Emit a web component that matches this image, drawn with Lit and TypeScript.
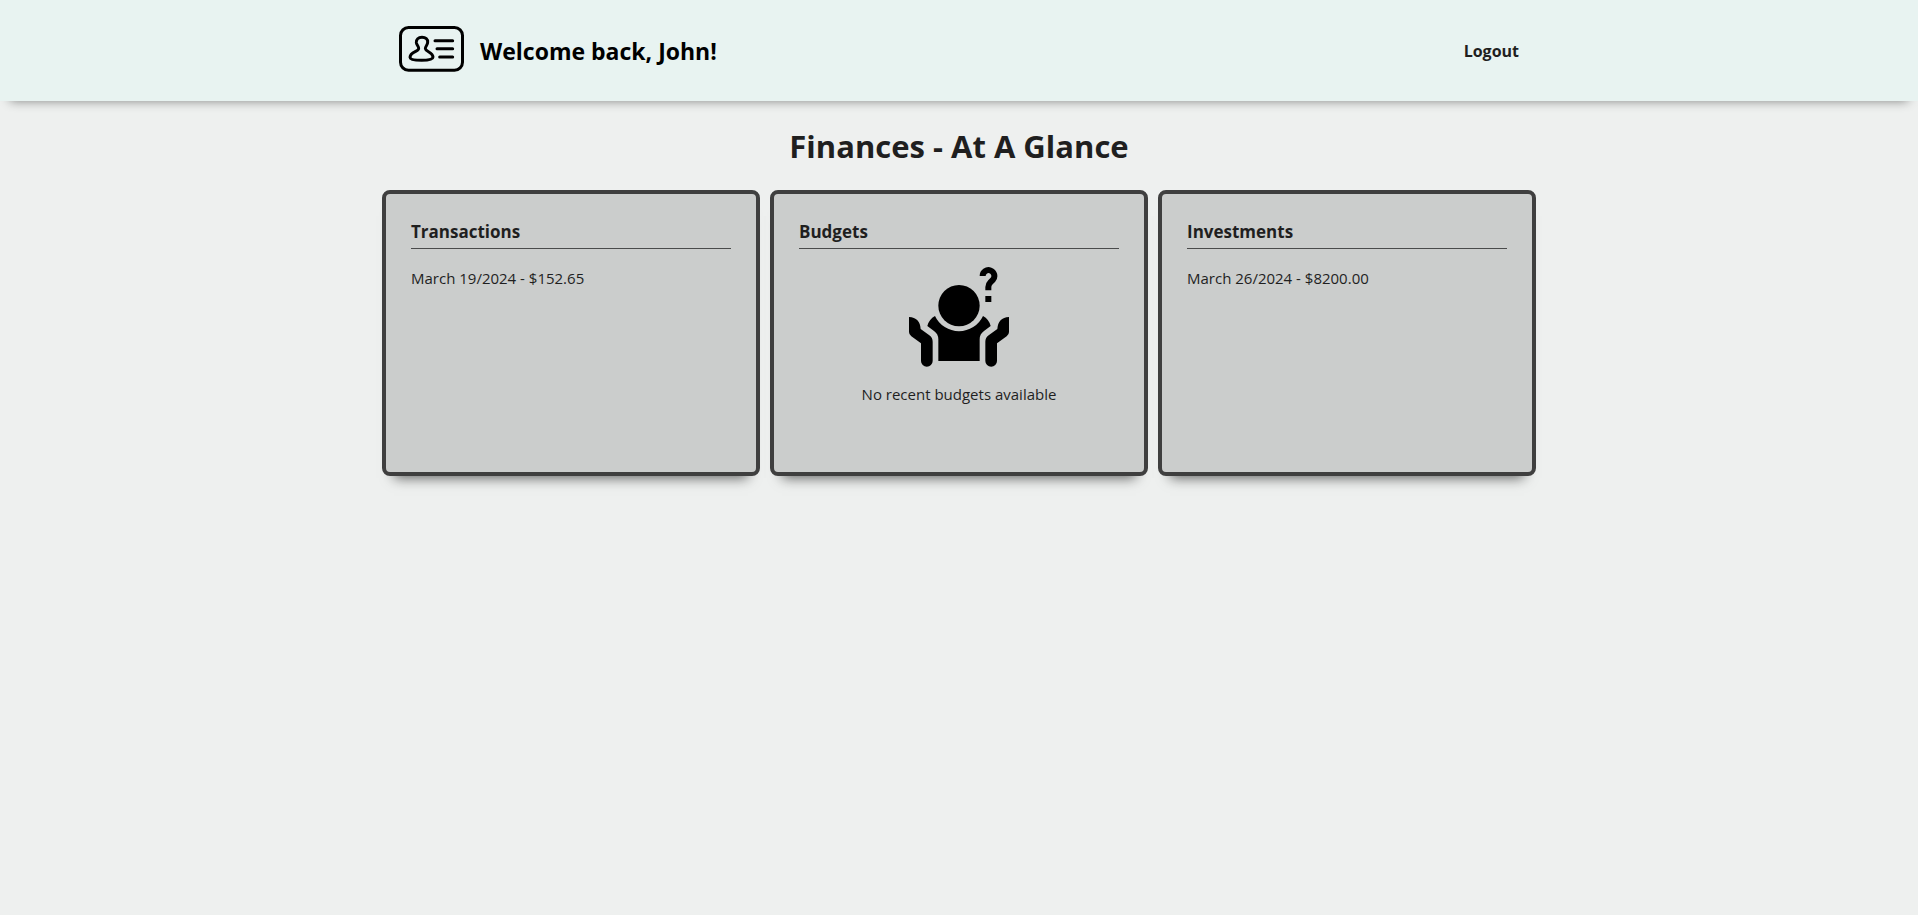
import { LitElement, html, css, svg } from "lit";
import { customElement, property } from "lit/decorators.js";

const idCardIcon = svg`
  <svg class="logo" viewBox="0 0 195 150" fill="none" stroke="#000" stroke-linecap="round" stroke-linejoin="round" aria-hidden="true">
    <rect x="4.5" y="4.5" width="186" height="128" rx="24" stroke-width="9" />
    <path stroke-width="9" d="M108 44H161M114 68H161M122 93H161" />
    <path stroke-width="9" d="M69 34C58 34 51 40 52 50C53 58 60 62 59 68C58 78 34 77 33 94C33 102 51 103 68 103C86 103 102 101 102 93C101 77 80 78 79 68C78 62 86 58 86 49C87 40 80 34 69 34Z" />
  </svg>`;

const shrugIcon = svg`
  <svg class="shrug" viewBox="0 0 300 300" fill="#000" aria-hidden="true">
    <circle cx="150" cy="116" r="62" />
    <path d="M221 27A17.500 17.500 0 1 1 252 38L244 46Q238 52 238 60V70" fill="none" stroke="#000" stroke-width="18" />
    <rect x="229" y="87" width="18" height="18" />
    <path d="M78 147A79.500 79.500 0 0 0 222 147Q240 157 245 177L225 192Q212 201 212 217V282H88V217Q88 201 75 192L55 177Q60 157 78 147Z" />
    <path d="M0 150Q33 152 35 186L61 205Q71 212 71 224V282A17.500 17.500 0 0 1 36 282V229L7 208Q0 203 0 195Z" />
    <path d="M300 150Q267 152 265 186L239 205Q229 212 229 224V282A17.500 17.500 0 0 0 264 282V229L293 208Q300 203 300 195Z" />
  </svg>`;

@customElement("finance-card")
class FinanceCard extends LitElement {
  @property() heading = "";
  @property({ attribute: false }) entries: string[] = [];

  static styles = css`
    :host {
      display: block;
      box-sizing: border-box;
      min-height: 286px;
      padding: 25px;
      border: 4px solid #3f3f3f;
      border-radius: 8px;
      background: #cbcdcc;
      box-shadow: 0 14px 12px -12px rgba(0, 0, 0, 0.6);
    }
    .heading {
      margin: 0 0 18px;
      padding-bottom: 4px;
      border-bottom: 1px solid #4a4b4b;
      font-size: 17px;
      line-height: 25px;
      font-weight: 700;
    }
    .entries {
      margin: 0;
      padding: 0;
      list-style: none;
      line-height: 22px;
    }
    .empty {
      display: flex;
      flex-direction: column;
      align-items: center;
      gap: 16px;
    }
    .empty p {
      margin: 0;
      line-height: 22px;
    }
    .shrug {
      width: 100px;
      height: 100px;
    }
  `;

  render() {
    return html`
      <h2 class="heading">${this.heading}</h2>
      ${this.entries.length
        ? html`<ul class="entries">${this.entries.map((e) => html`<li>${e}</li>`)}</ul>`
        : html`<div class="empty">
            ${shrugIcon}
            <p>No recent ${this.heading.toLowerCase()} available</p>
          </div>`}
    `;
  }
}

@customElement("app-root")
class AppRoot extends LitElement {
  static styles = css`
    :host {
      display: block;
      box-sizing: border-box;
      min-height: 100vh;
      border-bottom: 3px solid #fff;
      background: #eef0ef;
      color: #1f1f1f;
      font-family: "Segoe UI", "Open Sans", "Noto Sans", sans-serif;
      font-size: 15px;
    }
    .header {
      background: #e8f3f1;
      box-shadow: 0 10px 10px -10px rgba(0, 0, 0, 0.45);
    }
    .bar {
      box-sizing: border-box;
      max-width: 1154px;
      min-height: 101px;
      margin: 0 auto;
      padding: 0 17px;
      display: flex;
      align-items: center;
      justify-content: space-between;
    }
    .brand {
      display: flex;
      align-items: center;
      gap: 16px;
      color: #000;
    }
    .logo {
      width: 65px;
      height: 50px;
    }
    .welcome {
      font-size: 23px;
      line-height: 32px;
      font-weight: 700;
    }
    .logout {
      padding: 0;
      border: 0;
      background: none;
      color: inherit;
      font-family: inherit;
      font-size: 16px;
      line-height: 22px;
      font-weight: 700;
      cursor: pointer;
    }
    .main {
      max-width: 1154px;
      margin: 0 auto;
      padding: 23px 0;
    }
    .title {
      margin: 0 0 22px;
      font-size: 31px;
      line-height: 44px;
      font-weight: 700;
      text-align: center;
    }
    .cards {
      display: grid;
      grid-template-columns: repeat(auto-fit, minmax(320px, 1fr));
      gap: 10px;
    }
  `;

  render() {
    return html`
      <header class="header">
        <div class="bar">
          <div class="brand">${idCardIcon}<span class="welcome">Welcome back, John!</span></div>
          <button class="logout" type="button">Logout</button>
        </div>
      </header>
      <main class="main">
        <h1 class="title">Finances - At A Glance</h1>
        <div class="cards">
          <finance-card heading="Transactions" .entries=${["March 19/2024 - $152.65"]}></finance-card>
          <finance-card heading="Budgets"></finance-card>
          <finance-card heading="Investments" .entries=${["March 26/2024 - $8200.00"]}></finance-card>
        </div>
      </main>
    `;
  }
}
